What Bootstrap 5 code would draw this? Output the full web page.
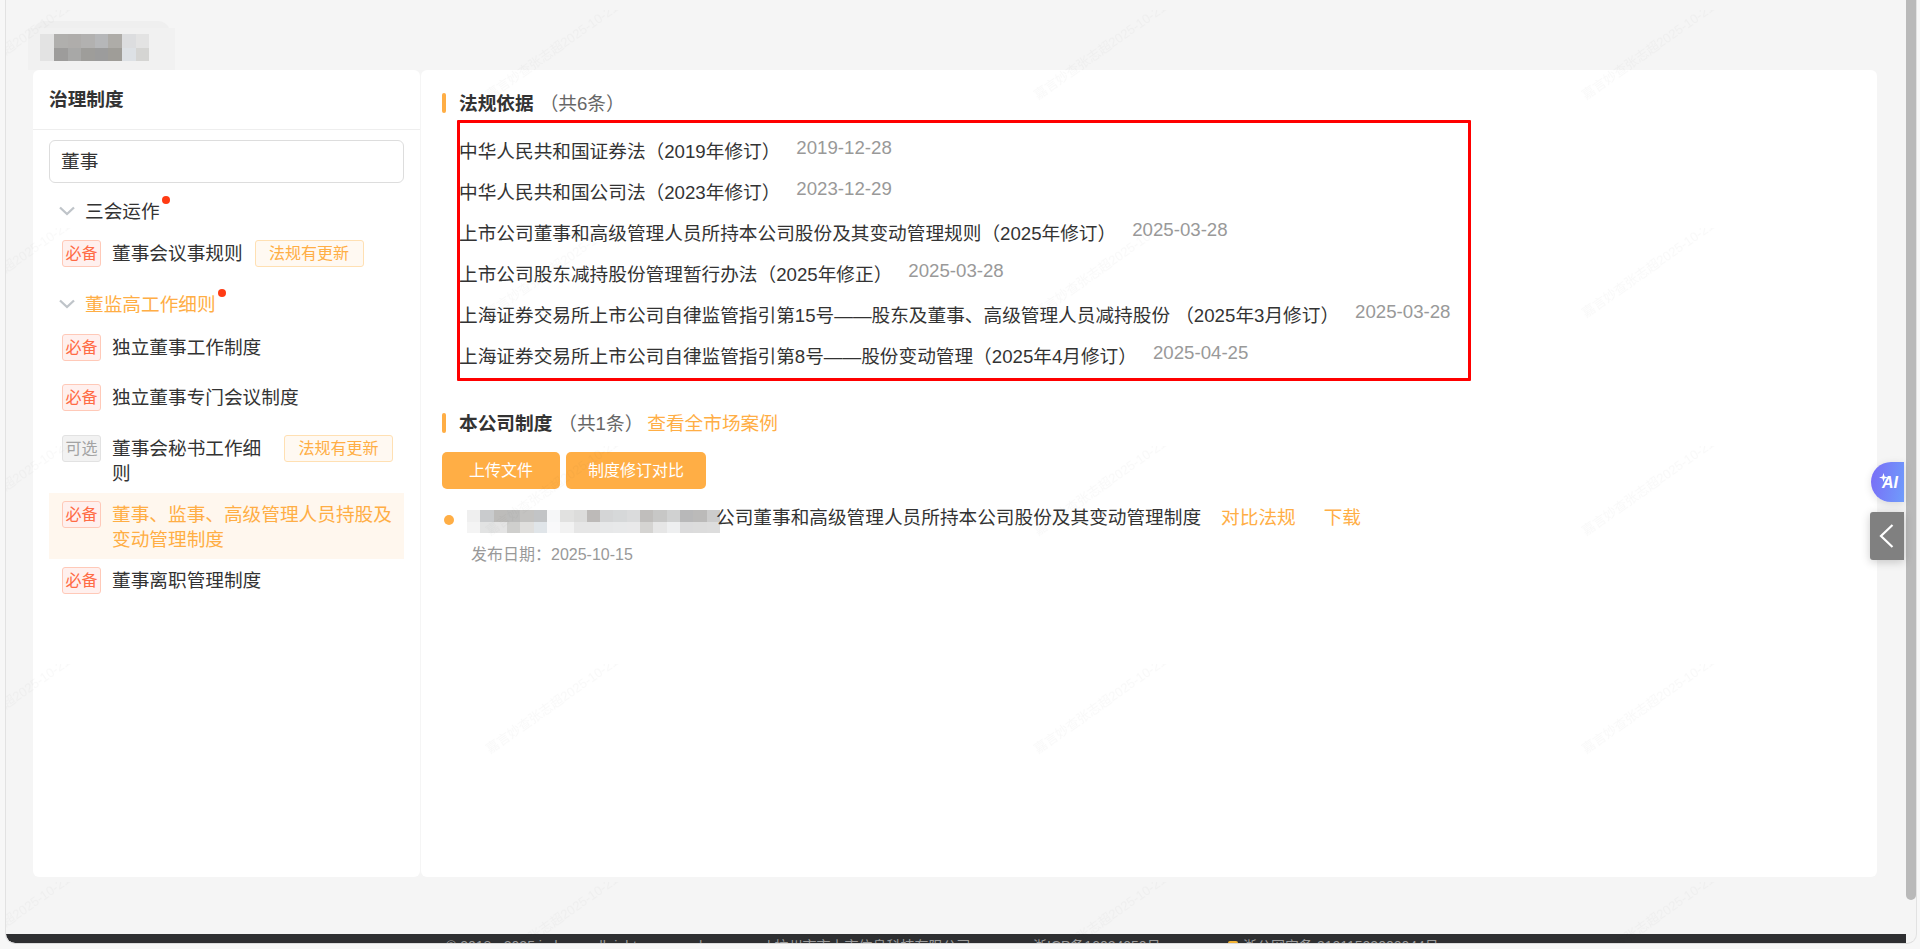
<!DOCTYPE html>
<html lang="zh-CN">
<head>
<meta charset="utf-8">
<title>治理制度</title>
<link href="https://cdn.jsdelivr.net/npm/bootstrap@5.3.0/dist/css/bootstrap.min.css" rel="stylesheet">
<style>
html,body{height:949px;overflow:hidden;background:#f7f7f7;}
body{font-family:"Liberation Sans","Noto Sans CJK SC",sans-serif;font-size:18.67px;color:#333;}
.app-frame{position:relative;margin-left:5px;width:1912px;height:944px;background:#f5f5f5;border-left:1px solid #e2e2e2;border-right:1px solid #e2e2e2;border-bottom:1px solid #dcdcdc;border-bottom-left-radius:10px;border-bottom-right-radius:10px;overflow:hidden;}
.app-main{min-width:0;}
.app-body{padding:21px 29px 0 27px;position:relative;}
.org-tab{width:137px;height:49px;padding-top:7px;background:#efefef;border-radius:12px 12px 0 0;}
.org-tab svg{display:block;margin:0 0 0 -5px;}
.panel-left,.panel-right{height:807px;background:#fff;border-radius:6px;}
.panel-left{width:387px;flex:none;}
.panel-right{margin-left:1px;padding:23px 0 0 21px;}
.panel-title{height:60px;padding:18px 16px 0;line-height:24px;font-weight:700;border-bottom:1px solid #eee;}
.search-field{display:block;width:355px;height:43px;margin:10px 0 0 16px;padding:0 11px;border:1px solid #ddd;border-radius:6px;font-size:18.67px;color:#333;background:#fff;line-height:41px;}
.tree-head{height:36px;padding-left:26px;margin-bottom:3px;position:relative;}
.tree-head.first{margin-top:10px;}
.tree-head.second{margin-top:4px;margin-bottom:4px;}
.tree-head svg{margin-right:10px;flex:none;}
.tree-label{padding-top:2px;}
.tree-on{color:#ffae45;}
.red-dot{width:8px;height:8px;background:#ff3b14;border-radius:50%;margin:-22px 0 0 2px;flex:none;}
.rule-row{margin-left:16px;width:355px;padding:8px 11px 8px 13px;}
.rule-single{height:50px;}
.rule-wide{height:51px;}
.rule-double{height:66px;}
.rule-active{background:#fff7ee;color:#ffae45;}
.rule-name{line-height:25px;margin:1px 0 0 11px;min-width:0;}
.level-tag{flex:none;width:39px;height:27px;line-height:25px;font-size:16px;text-align:center;border-radius:3px;border:1px solid #ffc9b8;background:#fff0ee;color:#ff6b45;}
.level-opt{border-color:#e2e2e2;background:#f2f2f2;color:#a3a3a3;}
.update-pill{flex:none;width:109px;height:27px;line-height:25px;margin-left:12px;font-size:16px;text-align:center;border-radius:3px;border:1px solid #ffe0b3;background:#fff9f2;color:#ffae45;}
.sec-head{height:20px;line-height:20px;}
.sec-bar{width:4px;height:20px;background:#ffae45;border-radius:2px;margin-right:13px;flex:none;}
.sec-name{font-weight:700;padding-top:2px;}
.sec-count{color:#666;margin-left:6px;padding-top:2px;}
.sec-link{color:#ffae45;text-decoration:none;margin-left:4px;padding-top:2px;}
.law-list{position:relative;margin:18px 0 0 17px;width:1012px;}
.law-row{height:41px;white-space:nowrap;}
.law-date{color:#999;margin:0 0 8px 16px;}
.red-mark{position:absolute;top:-11px;left:-2px;width:1014px;height:261px;border:3px solid #f00;border-radius:1px;pointer-events:none;}
.sec-two{margin-top:36px;}
.sec-btns{margin-top:19px;gap:6px;}
.btn-amber{height:37px;min-width:118px;padding:0 22px;font-size:16px;line-height:37px;color:#fff;background:#ffae45;border:0;border-radius:5px;}
.file-row{margin-top:16px;line-height:25px;white-space:nowrap;}
.file-dot{width:10px;height:10px;border-radius:50%;background:#ffae45;margin:10px 13px 0 2px;flex:none;}
.file-blur{margin-top:5px;flex:none;display:block;}
.file-name{margin-left:-4px;}
.file-link{color:#ffae45;text-decoration:none;margin-left:20px;}
.file-link.next{margin-left:28px;}
.file-meta{margin:11px 0 0 29px;font-size:16px;line-height:22px;color:#999;}
.site-foot{height:9px;flex:none;background:#2e2f31;color:#9a9a9a;font-size:14px;line-height:20px;padding:2px 0 0 440px;overflow:hidden;white-space:nowrap;border-bottom-left-radius:9px;}
.foot-a{width:321px;flex:none;}
.foot-b{width:266px;flex:none;}
.foot-c{width:195px;flex:none;}
.foot-shield{width:10px;height:12px;background:#f2b233;border-radius:2px;margin:5px 5px 0 0;flex:none;}
.scroll-rail{width:10px;flex:none;}
.scroll-thumb{height:900px;background:#b9b9b9;border-radius:0 0 5px 5px;}
.float-ai{position:absolute;top:462px;left:1865px;width:33px;height:40px;border-radius:20px 0 0 20px;background:linear-gradient(100deg,#7a6cf6,#6f9cfb);color:#fff;font-weight:700;font-style:italic;font-size:16px;line-height:42px;padding-left:11px;box-shadow:0 2px 8px rgba(0,0,0,.12);}
.float-ai svg{position:absolute;left:8px;top:11px;}
.float-back{position:absolute;top:512px;left:1864px;width:34px;height:48px;border-radius:3px 0 0 3px;background:#808080;box-shadow:0 2px 10px rgba(0,0,0,.2);}
.watermark{position:absolute;top:0;left:0;width:100%;height:100%;pointer-events:none;}
.watermark text{font-family:"Liberation Sans","Noto Sans CJK SC",sans-serif;font-size:13px;fill:#000;fill-opacity:.022;}
</style>
</head>
<body>
<div class="app-frame d-flex">
  <div class="app-main d-flex flex-column flex-grow-1">
    <div class="app-body flex-grow-1">
      <div class="org-tab">
        <svg width="147" height="42" viewBox="0 0 147 42" shape-rendering="crispEdges" aria-hidden="true">
          <rect width="147" height="42" fill="#f1f1f1"/>
          <g transform="translate(12,6)">
            <rect x="0" y="0" width="14" height="14" fill="#e3e3e3"/><rect x="14" y="0" width="14" height="14" fill="#b0afad"/><rect x="28" y="0" width="13" height="14" fill="#afadab"/><rect x="41" y="0" width="14" height="14" fill="#b2b1b0"/><rect x="55" y="0" width="13" height="14" fill="#b6b7b9"/><rect x="68" y="0" width="14" height="14" fill="#aeaca8"/><rect x="82" y="0" width="14" height="14" fill="#dcdddf"/><rect x="96" y="0" width="13" height="14" fill="#e3e3e3"/>
            <rect x="0" y="14" width="14" height="13" fill="#e3e3e3"/><rect x="14" y="14" width="14" height="13" fill="#9d9c9b"/><rect x="28" y="14" width="13" height="13" fill="#a8a8a7"/><rect x="41" y="14" width="14" height="13" fill="#9e9d9a"/><rect x="55" y="14" width="13" height="13" fill="#9c9c9c"/><rect x="68" y="14" width="14" height="13" fill="#9f9d98"/><rect x="82" y="14" width="14" height="13" fill="#dde1e5"/><rect x="96" y="14" width="13" height="13" fill="#d5d5d3"/>
          </g>
        </svg>
      </div>
      <div class="d-flex">
        <aside class="panel-left">
          <div class="panel-title">治理制度</div>
          <div class="search-field">董事</div>
          <div class="tree-head first d-flex align-items-center">
            <svg width="16" height="10" viewBox="0 0 16 10" aria-hidden="true"><polyline points="1,1.5 8,8 15,1.5" fill="none" stroke="#bfc4c9" stroke-width="2.3"/></svg>
            <span class="tree-label">三会运作</span><span class="red-dot"></span>
          </div>
          <div class="rule-row rule-single d-flex align-items-start">
            <span class="level-tag">必备</span><span class="rule-name">董事会议事规则</span><span class="update-pill">法规有更新</span>
          </div>
          <div class="tree-head second d-flex align-items-center">
            <svg width="16" height="10" viewBox="0 0 16 10" aria-hidden="true"><polyline points="1,1.5 8,8 15,1.5" fill="none" stroke="#bfc4c9" stroke-width="2.3"/></svg>
            <span class="tree-label tree-on">董监高工作细则</span><span class="red-dot"></span>
          </div>
          <div class="rule-row rule-single d-flex align-items-start">
            <span class="level-tag">必备</span><span class="rule-name">独立董事工作制度</span>
          </div>
          <div class="rule-row rule-wide d-flex align-items-start">
            <span class="level-tag">必备</span><span class="rule-name">独立董事专门会议制度</span>
          </div>
          <div class="rule-row rule-double d-flex align-items-start">
            <span class="level-tag level-opt">可选</span><span class="rule-name">董事会秘书工作细则</span><span class="update-pill">法规有更新</span>
          </div>
          <div class="rule-row rule-double rule-active d-flex align-items-start">
            <span class="level-tag">必备</span><span class="rule-name">董事、监事、高级管理人员持股及变动管理制度</span>
          </div>
          <div class="rule-row rule-single d-flex align-items-start">
            <span class="level-tag">必备</span><span class="rule-name">董事离职管理制度</span>
          </div>
        </aside>
        <main class="panel-right flex-grow-1">
          <div class="sec-head d-flex align-items-center">
            <span class="sec-bar"></span><span class="sec-name">法规依据</span><span class="sec-count">（共6条）</span>
          </div>
          <div class="law-list">
            <div class="law-row d-flex align-items-center"><span>中华人民共和国证券法（2019年修订）</span><span class="law-date">2019-12-28</span></div>
            <div class="law-row d-flex align-items-center"><span>中华人民共和国公司法（2023年修订）</span><span class="law-date">2023-12-29</span></div>
            <div class="law-row d-flex align-items-center"><span>上市公司董事和高级管理人员所持本公司股份及其变动管理规则（2025年修订）</span><span class="law-date">2025-03-28</span></div>
            <div class="law-row d-flex align-items-center"><span>上市公司股东减持股份管理暂行办法（2025年修正）</span><span class="law-date">2025-03-28</span></div>
            <div class="law-row d-flex align-items-center"><span>上海证券交易所上市公司自律监管指引第15号——股东及董事、高级管理人员减持股份 （2025年3月修订）</span><span class="law-date">2025-03-28</span></div>
            <div class="law-row d-flex align-items-center"><span>上海证券交易所上市公司自律监管指引第8号——股份变动管理（2025年4月修订）</span><span class="law-date">2025-04-25</span></div>
            <div class="red-mark"></div>
          </div>
          <div class="sec-head sec-two d-flex align-items-center">
            <span class="sec-bar"></span><span class="sec-name">本公司制度</span><span class="sec-count">（共1条）</span><a class="sec-link" href="#">查看全市场案例</a>
          </div>
          <div class="sec-btns d-flex">
            <button type="button" class="btn btn-amber">上传文件</button>
            <button type="button" class="btn btn-amber">制度修订对比</button>
          </div>
          <div class="file-row d-flex align-items-start">
            <span class="file-dot"></span>
            <svg class="file-blur" width="253" height="23" viewBox="0 0 19 2" preserveAspectRatio="none" shape-rendering="crispEdges" aria-hidden="true">
              <rect x="0" y="0" width="1" height="1" fill="#efefef"/><rect x="1" y="0" width="1" height="1" fill="#c9cbcd"/><rect x="2" y="0" width="1" height="1" fill="#bdbcba"/><rect x="3" y="0" width="1" height="1" fill="#bcbcbb"/><rect x="4" y="0" width="1" height="1" fill="#c4c3c1"/><rect x="5" y="0" width="1" height="1" fill="#c2c4c6"/><rect x="6" y="0" width="1" height="1" fill="#f6f7f8"/><rect x="7" y="0" width="1" height="1" fill="#e1e1e0"/><rect x="8" y="0" width="1" height="1" fill="#dcdcdb"/><rect x="9" y="0" width="1" height="1" fill="#bdbab8"/><rect x="10" y="0" width="1" height="1" fill="#d4d5d6"/><rect x="11" y="0" width="1" height="1" fill="#d6d8d9"/><rect x="12" y="0" width="1" height="1" fill="#dadbdc"/><rect x="13" y="0" width="1" height="1" fill="#c0bebc"/><rect x="14" y="0" width="1" height="1" fill="#c7c7c6"/><rect x="15" y="0" width="1" height="1" fill="#d0d1d1"/><rect x="16" y="0" width="1" height="1" fill="#b8b8b9"/><rect x="17" y="0" width="1" height="1" fill="#bbbab9"/><rect x="18" y="0" width="1" height="1" fill="#cccccc"/>
              <rect x="0" y="1" width="1" height="1" fill="#f4f4f4"/><rect x="1" y="1" width="1" height="1" fill="#e2e3e3"/><rect x="2" y="1" width="1" height="1" fill="#e4e4e4"/><rect x="3" y="1" width="1" height="1" fill="#cfcfcd"/><rect x="4" y="1" width="1" height="1" fill="#e0dfdd"/><rect x="5" y="1" width="1" height="1" fill="#e0e5e9"/><rect x="6" y="1" width="1" height="1" fill="#f9f9fa"/><rect x="7" y="1" width="1" height="1" fill="#f2f2f2"/><rect x="8" y="1" width="1" height="1" fill="#e6e6e6"/><rect x="9" y="1" width="1" height="1" fill="#e6e6e6"/><rect x="10" y="1" width="1" height="1" fill="#e7e8e9"/><rect x="11" y="1" width="1" height="1" fill="#e8e9ea"/><rect x="12" y="1" width="1" height="1" fill="#e9e9ea"/><rect x="13" y="1" width="1" height="1" fill="#d5d4d2"/><rect x="14" y="1" width="1" height="1" fill="#e6e6e6"/><rect x="15" y="1" width="1" height="1" fill="#eeeff0"/><rect x="16" y="1" width="1" height="1" fill="#dbdbdc"/><rect x="17" y="1" width="1" height="1" fill="#dcdcdc"/><rect x="18" y="1" width="1" height="1" fill="#dddddd"/>
            </svg>
            <span class="file-name">公司董事和高级管理人员所持本公司股份及其变动管理制度</span>
            <a class="file-link" href="#">对比法规</a><a class="file-link next" href="#">下载</a>
          </div>
          <div class="file-meta">发布日期：2025-10-15</div>
        </main>
      </div>
    </div>
    <footer class="site-foot d-flex">
      <span class="foot-a">© 2018 - 2025 ipd.com all rights reserved</span>
      <span class="foot-b">| 杭州市市上市信息科技有限公司</span>
      <span class="foot-c">浙ICP备16034050号</span>
      <span class="foot-shield"></span>
      <span>浙公网安备 31011502000044号</span>
    </footer>
  </div>
  <div class="scroll-rail"><div class="scroll-thumb"></div></div>
  <div class="float-ai">AI
    <svg width="9" height="9" viewBox="0 0 10 10" aria-hidden="true"><path d="M5 0 6.2 3.8 10 5 6.2 6.2 5 10 3.8 6.2 0 5 3.8 3.8Z" fill="#fff"/></svg>
  </div>
  <div class="float-back">
    <svg width="34" height="48" viewBox="0 0 34 48" aria-hidden="true"><polyline points="22.5,13 11,24 22.5,35" fill="none" stroke="#fff" stroke-width="2.2"/></svg>
  </div>
  <svg class="watermark" aria-hidden="true">
    <defs>
      <pattern id="wm" patternUnits="userSpaceOnUse" x="476" y="10" width="548" height="218">
        <text transform="translate(8,90) rotate(-35)">嘉言妙查张志超2025-10-21</text>
      </pattern>
    </defs>
    <rect width="100%" height="100%" fill="url(#wm)"/>
  </svg>
</div>
<script src="https://cdn.jsdelivr.net/npm/bootstrap@5.3.0/dist/js/bootstrap.bundle.min.js"></script>
</body>
</html>
